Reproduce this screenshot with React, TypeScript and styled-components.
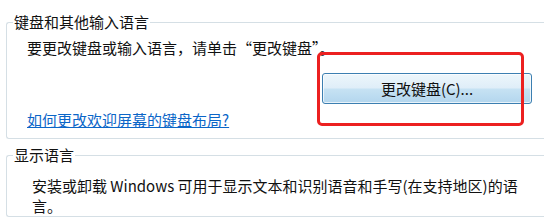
import { createGlobalStyle } from "styled-components";
import styled from "styled-components";

// Page-wide reset
const GlobalStyle = createGlobalStyle`
    html, body {
        margin: 0;
        padding: 0;
        background: #ffffff;
        overflow: hidden;
    }
    body {
        font-family: "Noto Sans CJK SC", "Noto Sans", sans-serif;
        font-size: 15px;
        color: #111111;
    }
`

////////////////////////////////////////////////////////
//////////////////   STYLE COMPONENTS   ////////////////
////////////////////////////////////////////////////////
const Page = styled.div`
    position: relative;
    width: 544px;
    height: 224px;
    padding-top: 12px;
    box-sizing: border-box;
    overflow: hidden;
`
// Group box running off the right edge of the window
const Group = styled.fieldset<{ $gap: number }>`
    margin: 0 0 ${props => props.$gap}px 6px;
    padding: 0 0 0 6px;
    border: 1px solid #d5dfe5;
    border-right: none;
    border-radius: 3px 0 0 3px;
    min-width: 0;
`
const Legend = styled.legend`
    padding: 0 1px;
    line-height: 20px;
    font-size: 15px;
    color: #111111;
`
const Text = styled.p<{ $indent: number; $top: number }>`
    margin: ${props => props.$top}px 0 0 ${props => props.$indent}px;
    line-height: 20px;
    max-width: 500px;
`
const ButtonRow = styled.div`
    display: flex;
    margin: 15px 0 0 309px;
`
const Button = styled.button`
    width: 210px;
    height: 31px;
    border: 1px solid #3c7fb1;
    border-radius: 3px;
    background: linear-gradient(to bottom, #edf6fb 0%, #dfeef8 48%, #c6e2f3 52%, #b3d6ee 100%);
    box-shadow: inset 0 0 0 1px rgba(255, 255, 255, 0.7);
    font-family: "Noto Sans CJK SC", "Noto Sans", sans-serif;
    font-size: 15px;
    color: #111111;
    padding: 0;
    cursor: pointer;
`
const Link = styled.a`
    display: inline-block;
    margin: 6px 0 8px 14px;
    line-height: 20px;
    color: #0b66c8;
    text-decoration: underline;
    cursor: pointer;
`
// Red annotation frame drawn over the button
const Highlight = styled.div`
    position: absolute;
    left: 317px;
    top: 52px;
    width: 207px;
    height: 74px;
    box-sizing: border-box;
    border: 3px solid #ec2020;
    border-radius: 5px;
    pointer-events: none;
`

////////////////////////////////////////////////////////////
//////////////////   MAIN COMPONENT   //////////////////////
////////////////////////////////////////////////////////////
const App = () => {
    return (
        <>
            <GlobalStyle />
            <Page>
                <Group $gap={6}>
                    <Legend>键盘和其他输入语言</Legend>
                    <Text $indent={14} $top={6}>要更改键盘或输入语言，请单击“更改键盘”。</Text>
                    <ButtonRow>
                        <Button>更改键盘(C)...</Button>
                    </ButtonRow>
                    <Link>如何更改欢迎屏幕的键盘布局?</Link>
                </Group>
                <Group $gap={0}>
                    <Legend>显示语言</Legend>
                    <Text $indent={19} $top={11}>
                        安装或卸载 Windows 可用于显示文本和识别语音和手写(在支持地区)的语言。
                    </Text>
                </Group>
                <Highlight />
            </Page>
        </>
    )
}

export default App;
